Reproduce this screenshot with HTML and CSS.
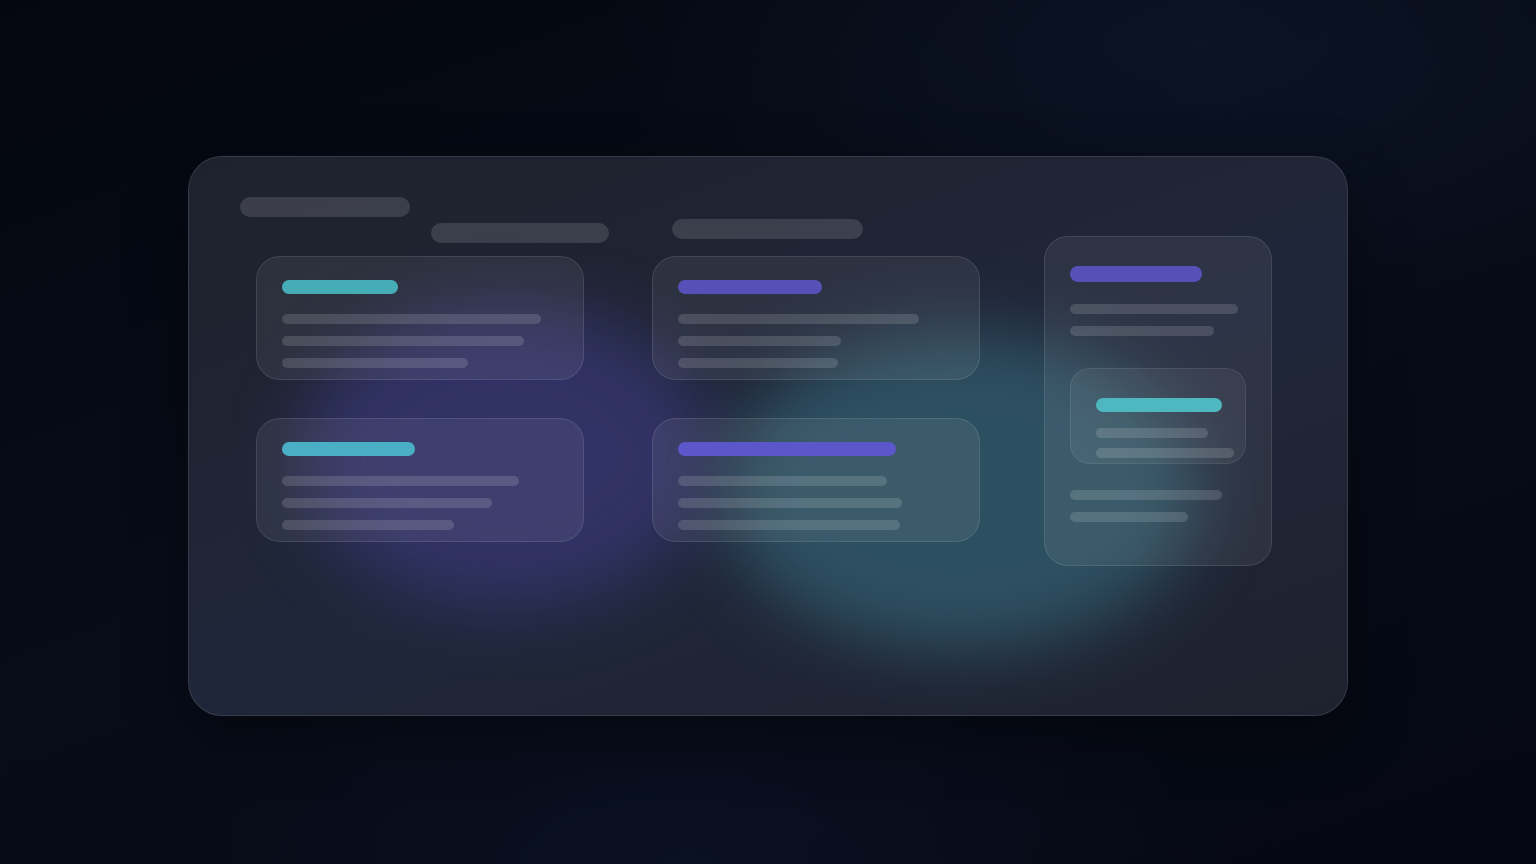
FILE: index.html
```html
<!DOCTYPE html>
<html lang="en">
<head>
<meta charset="utf-8">
<title>Skeleton dashboard</title>
<link rel="stylesheet" href="styles.css">
</head>
<body>
<div class="stage">
  <div class="panel">
    <div class="blob blob-purple"></div>
    <div class="blob blob-teal"></div>
    <div class="col col-left">
      <div class="bar bar-a"></div>
      <div class="bar bar-b"></div>
      <div class="card card-1">
        <div class="accent teal" style="width:116px"></div>
        <div class="line first" style="width:259px"></div>
        <div class="line" style="width:242px"></div>
        <div class="line" style="width:186px"></div>
      </div>
      <div class="card card-2">
        <div class="accent teal2" style="width:133px"></div>
        <div class="line first" style="width:237px"></div>
        <div class="line" style="width:210px"></div>
        <div class="line" style="width:172px"></div>
      </div>
    </div>
    <div class="col col-mid">
      <div class="bar bar-c"></div>
      <div class="card card-3">
        <div class="accent purple" style="width:144px"></div>
        <div class="line first" style="width:241px"></div>
        <div class="line" style="width:163px"></div>
        <div class="line" style="width:160px"></div>
      </div>
      <div class="card card-4">
        <div class="accent purple2" style="width:218px"></div>
        <div class="line first" style="width:209px"></div>
        <div class="line" style="width:224px"></div>
        <div class="line" style="width:222px"></div>
      </div>
    </div>
    <div class="col col-right">
      <div class="card tall">
        <div class="accent purple big" style="width:132px"></div>
        <div class="line gap22" style="width:168px"></div>
        <div class="line" style="width:144px"></div>
        <div class="nested">
          <div class="accent teal3" style="width:126px"></div>
          <div class="line gap16" style="width:112px"></div>
          <div class="line gap10" style="width:138px"></div>
        </div>
        <div class="line gap26" style="width:152px"></div>
        <div class="line" style="width:118px"></div>
      </div>
    </div>
  </div>
</div>
</body>
</html>
```

FILE: styles.css
```css
html, body {
  margin: 0;
  padding: 0;
  width: 100%;
  height: 100%;
}
body {
  font-family: "Inter", "Liberation Sans", sans-serif;
  background:
    radial-gradient(ellipse 55% 45% at 78% 5%, rgba(18, 28, 52, 0.5), transparent 70%),
    radial-gradient(ellipse 50% 40% at 45% 100%, rgba(14, 22, 46, 0.55), transparent 70%),
    linear-gradient(160deg, #04070f 0%, #070c18 50%, #050812 100%);
  overflow: hidden;
}
.stage {
  display: flex;
  justify-content: center;
  padding-top: 156px;
}
.panel {
  position: relative;
  box-sizing: border-box;
  width: 1160px;
  height: 560px;
  border-radius: 34px;
  border: 1px solid rgba(255, 255, 255, 0.11);
  background: linear-gradient(160deg, #1e222c 0%, #20263a 55%, #1e222e 100%);
  padding: 40px 0 0 51px;
  display: flex;
  align-items: flex-start;
  overflow: hidden;
  box-shadow: 0 20px 60px rgba(0, 0, 0, 0.35);
}
.blob {
  position: absolute;
  border-radius: 50%;
  filter: blur(34px);
  z-index: 0;
}
.blob-purple {
  left: 112px;
  top: 150px;
  width: 410px;
  height: 300px;
  background: #34346a;
  opacity: 0.9;
}
.blob-teal {
  left: 534px;
  top: 176px;
  width: 476px;
  height: 318px;
  background: #2f5566;
  opacity: 0.9;
}
.col {
  position: relative;
  z-index: 1;
  display: flex;
  flex-direction: column;
  align-items: flex-start;
}
.col-left { width: 369px; }
.col-mid { margin-left: 43px; }
.col-right { margin-left: 64px; }

.bar {
  height: 20px;
  border-radius: 10px;
  background: rgba(255, 255, 255, 0.13);
}
.bar-a { width: 170px; }
.bar-b { width: 178px; margin-left: 191px; margin-top: 6px; }
.bar-c { width: 191px; margin-left: 20px; margin-top: 22px; }

.card {
  box-sizing: border-box;
  width: 328px;
  height: 124px;
  padding: 23px 25px 0;
  border-radius: 24px;
  border: 1px solid rgba(255, 255, 255, 0.1);
  background: rgba(255, 255, 255, 0.065);
  display: flex;
  flex-direction: column;
  align-items: flex-start;
}
.card-1 { margin-left: 16px; margin-top: 13px; }
.card-2 { margin-left: 16px; margin-top: 38px; }
.card-3 { margin-top: 17px; }
.card-4 { margin-top: 38px; }
.card.tall {
  width: 228px;
  height: 330px;
  margin-top: 39px;
  padding-top: 29px;
}

.accent {
  height: 14px;
  border-radius: 7px;
  flex: none;
}
.accent.big { height: 16px; border-radius: 8px; }
.teal { background: #46adb6; }
.teal2 { background: #4aafc5; }
.teal3 { background: #4eb7c0; }
.purple { background: #5650b8; }
.purple2 { background: #5b56c9; }

.line {
  height: 10px;
  border-radius: 5px;
  background: rgba(255, 255, 255, 0.14);
  margin-top: 12px;
  flex: none;
}
.line.first { margin-top: 20px; }
.line.gap22 { margin-top: 22px; }
.line.gap16 { margin-top: 16px; }
.line.gap10 { margin-top: 10px; }
.line.gap26 { margin-top: 26px; }

.nested {
  box-sizing: border-box;
  width: 176px;
  height: 96px;
  margin-top: 32px;
  padding: 29px 0 0 25px;
  border-radius: 20px;
  border: 1px solid rgba(255, 255, 255, 0.08);
  background: rgba(255, 255, 255, 0.06);
  display: flex;
  flex-direction: column;
  align-items: flex-start;
  flex: none;
}
```
